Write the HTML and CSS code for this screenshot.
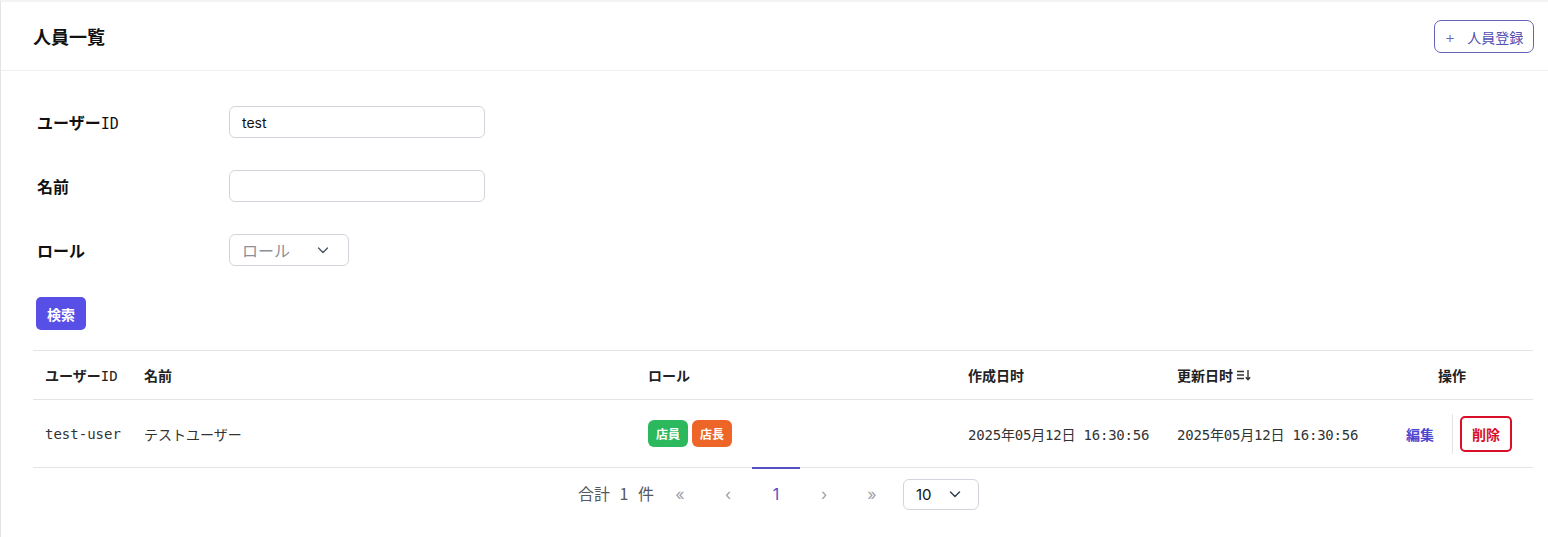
FILE: index.html
```html
<!DOCTYPE html>
<html lang="ja">
<head>
<meta charset="utf-8">
<title>人員一覧</title>
<link rel="stylesheet" href="styles.css">
</head>
<body>
<div class="page">
  <header class="header">
    <h1 class="title">人員一覧</h1>
    <button class="btn-outline"><span class="plus">+</span>人員登録</button>
  </header>
  <main class="content">
    <form class="search">
      <div class="row">
        <label class="label">ユーザー<span class="mono">ID</span></label>
        <div class="input">test</div>
      </div>
      <div class="row">
        <label class="label">名前</label>
        <div class="input"></div>
      </div>
      <div class="row">
        <label class="label">ロール</label>
        <div class="select role">
          <span class="placeholder">ロール</span>
          <svg width="14" height="14" viewBox="0 0 14 14"><path d="M2.5 5 L7 9.5 L11.5 5" fill="none" stroke="#4b5563" stroke-width="1.4" stroke-linecap="round" stroke-linejoin="round"/></svg>
        </div>
      </div>
      <button type="button" class="btn-primary">検索</button>
    </form>

    <table class="table">
      <colgroup>
        <col class="c1"><col class="c2"><col class="c3"><col class="c4"><col class="c5"><col class="c6">
      </colgroup>
      <thead>
        <tr>
          <th>ユーザー<span class="mono">ID</span></th>
          <th>名前</th>
          <th>ロール</th>
          <th>作成日时</th>
          <th><span class="sort">更新日时
            <svg width="16" height="14" viewBox="0 0 16 14"><path d="M1 3.5 H8 M1 7 H8 M1 10.5 H8" stroke="#333" stroke-width="1.4" fill="none"/><path d="M12 2 V11.5 M9.8 9.2 L12 11.6 L14.2 9.2" stroke="#333" stroke-width="1.4" fill="none"/></svg></span></th>
          <th class="center">操作</th>
        </tr>
      </thead>
      <tbody>
        <tr>
          <td class="mono-cell">test-user</td>
          <td>テストユーザー</td>
          <td><span class="badge green">店員</span><span class="badge orange">店長</span></td>
          <td class="mono-cell date">2025年05月12日 16:30:56</td>
          <td class="mono-cell date">2025年05月12日 16:30:56</td>
          <td>
            <div class="actions">
              <a class="edit">編集</a>
              <span class="sep"></span>
              <button class="btn-danger">削除</button>
            </div>
          </td>
        </tr>
      </tbody>
    </table>

    <nav class="pager">
      <span class="total">合計 1 件</span>
      <span class="pg muted">&laquo;</span>
      <span class="pg muted">&lsaquo;</span>
      <span class="pg active">1</span>
      <span class="pg muted">&rsaquo;</span>
      <span class="pg muted">&raquo;</span>
      <div class="select size">
        <span>10</span>
        <svg width="14" height="14" viewBox="0 0 14 14"><path d="M2.5 5 L7 9.5 L11.5 5" fill="none" stroke="#374151" stroke-width="1.5" stroke-linecap="round" stroke-linejoin="round"/></svg>
      </div>
    </nav>
  </main>
</div>
</body>
</html>
```
FILE: styles.css
```css
* { box-sizing: border-box; }
html, body { margin: 0; background: #fff; }
body {
  font-family: "Noto Sans CJK JP", "Noto Sans", sans-serif;
  color: #111;
}
.page {
  min-height: 537px;
  border-left: 1px solid #e4e4e4;
  border-top: 2px solid #f3f3f3;
}
.header {
  height: 69px;
  display: flex;
  align-items: center;
  justify-content: space-between;
  padding: 0 14px 0 32px;
  border-bottom: 1px solid #efefef;
}
.title {
  margin: 0;
  font-size: 18px;
  font-weight: 700;
  line-height: 1;
  color: #111;
}
.btn-outline {
  height: 33px;
  width: 100px;
  background: #fff;
  border: 1px solid #6464b8;
  border-radius: 7px;
  color: #5250b0;
  font-family: "Noto Sans CJK JP", sans-serif;
  font-size: 14px;
  display: flex;
  align-items: center;
  justify-content: center;
  padding: 0;
  margin-top: 1px;
}
.plus { font-size: 16px; margin-right: 12px; color: #6a68c0; font-family: "Inter", sans-serif; font-weight: 300; }

.content { padding: 35px 15px 0 32px; }
.search { display: flex; flex-direction: column; }
.row { display: flex; align-items: center; margin-bottom: 32px; }
.label {
  width: 192px;
  margin-left: 4px;
  font-size: 16px;
  font-weight: 700;
  color: #111;
}
.mono { font-family: "DejaVu Sans Mono", monospace; font-weight: 400; }
.label .mono { font-size: 15px; }
.input {
  width: 256px;
  height: 32px;
  border: 1px solid #d1d5db;
  border-radius: 6px;
  padding: 0 12px;
  display: flex;
  align-items: center;
  font-family: "Inter", sans-serif;
  font-size: 14px;
  color: #111;
}
.select {
  display: flex;
  align-items: center;
  justify-content: space-between;
  border: 1px solid #d1d5db;
  border-radius: 6px;
}
.role { width: 120px; height: 32px; padding: 0 18px 0 12px; }
.placeholder { color: #8b8f98; font-size: 16px; }
.btn-primary {
  align-self: flex-start;
  margin-left: 3px;
  margin-top: -1px;
  width: 50px;
  height: 33px;
  border: 0;
  border-radius: 5px;
  background: #5850e6;
  color: #fff;
  font-family: "Noto Sans CJK JP", sans-serif;
  font-size: 14px;
  font-weight: 700;
  padding: 0;
}

.table {
  margin-top: 20px;
  width: 1500px;
  border-collapse: collapse;
  table-layout: fixed;
}
.c1 { width: 99px; } .c2 { width: 504px; } .c3 { width: 320px; }
.c4 { width: 209px; } .c5 { width: 206px; } .c6 { width: 162px; }
.table th, .table td {
  text-align: left;
  padding: 0 12px;
  font-size: 14px;
  white-space: nowrap;
}
.table thead tr { height: 49px; border-top: 1px solid #e3e4e7; border-bottom: 1px solid #e3e4e7; }
.table th { font-weight: 700; color: #222; }
.table th .mono { font-size: 14px; }
.table th.center { text-align: center; }
.table tbody tr { height: 68px; border-bottom: 1px solid #e3e4e7; }
.table td { color: #333; }
.mono-cell { font-family: "DejaVu Sans Mono", "Noto Sans CJK JP", monospace; font-size: 14px; }
.date { letter-spacing: -0.2px; }
.sort { display: inline-flex; align-items: center; gap: 3px; }
.badge {
  display: inline-block;
  height: 27px;
  line-height: 27px;
  padding: 0 8px;
  border-radius: 6px;
  color: #fff;
  font-size: 12px;
  font-weight: 700;
  margin-right: 4px;
  vertical-align: middle;
}
.green { background: #2cb85c; }
.orange { background: #ee6528; }
.actions { display: flex; align-items: center; padding-left: 23px; }
.edit { color: #4d46d0; font-weight: 700; font-size: 14px; }
.sep { width: 1px; height: 40px; background: #e3e4e7; margin: 0 7px 0 18px; }
.btn-danger {
  width: 52px;
  height: 36px;
  border: 2px solid #d90f2a;
  border-radius: 5px;
  background: #fff;
  color: #d90f2a;
  font-family: "Noto Sans CJK JP", sans-serif;
  font-size: 14px;
  font-weight: 700;
  padding: 0;
}

.pager {
  display: flex;
  align-items: center;
  justify-content: center;
  width: 1500px;
  margin-top: -1px;
  padding-right: 9px;
}
.total { color: #55595f; font-size: 16px; width: 78px; word-spacing: 6px; }
.pg {
  width: 48px;
  height: 52px;
  border-top: 2px solid transparent;
  display: flex;
  align-items: center;
  justify-content: center;
  font-family: "Inter", sans-serif;
  font-size: 16px;
}
.muted { color: #9ca0a8; }
.active { border-top-color: #5450c4; color: #5450c4; }
.size {
  width: 76px;
  height: 31px;
  margin-left: 7px;
  padding: 0 16px 0 12px;
  font-family: "Inter", sans-serif;
  font-size: 15px;
  color: #111;
  margin-top: 2px;
}
```
